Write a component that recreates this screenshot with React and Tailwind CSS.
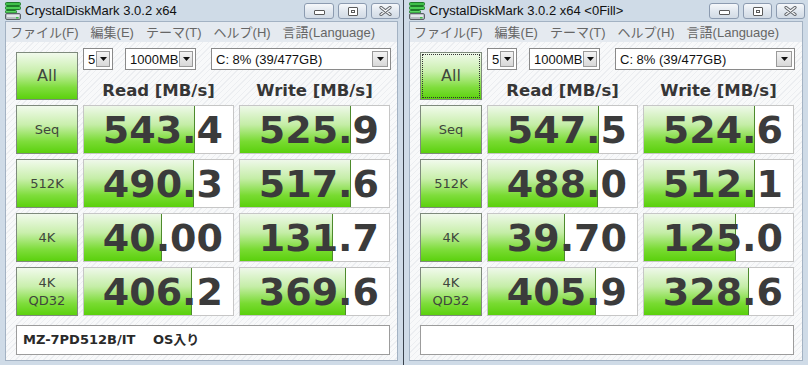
const WINDOWS = [
  {
    title: 'CrystalDiskMark 3.0.2 x64',
    rows: [
      [543.4, 525.9],
      [490.3, 517.6],
      [40.0, 131.7],
      [406.2, 369.6],
    ],
    comment: 'MZ-7PD512B/IT　 OS入り',
    focus: false,
  },
  {
    title: 'CrystalDiskMark 3.0.2 x64 <0Fill>',
    rows: [
      [547.5, 524.6],
      [488.0, 512.1],
      [39.7, 125.0],
      [405.9, 328.6],
    ],
    comment: '',
    focus: true,
  },
]

const MENU = ['ファイル(F)', '編集(E)', 'テーマ(T)', 'ヘルプ(H)', '言語(Language)']
const LABELS = [['Seq'], ['512K'], ['4K'], ['4K', 'QD32']]

const UI_FONT = 'font-["Liberation_Sans","Noto_Sans_CJK_JP",sans-serif]'

function fmt(v) {
  return v >= 100 ? v.toFixed(1) : v.toFixed(2)
}

// CrystalDiskMark draws the bar on a log scale
function barPct(v) {
  return Math.min(100, (Math.log10(v * 10) / 5) * 100)
}

function AppIcon() {
  return (
    <svg width="17" height="18" viewBox="0 0 17 18" className="shrink-0">
      <rect x="0.5" y="0.5" width="15" height="3" rx="1" fill="#3fbf4a" stroke="#1f7a2a" />
      <rect x="0.5" y="4.5" width="15" height="3" rx="1" fill="#4ccf55" stroke="#1f7a2a" />
      <rect x="0.5" y="8.5" width="11" height="2.5" rx="1" fill="#5ad862" stroke="#1f7a2a" />
      <rect x="0.5" y="11.5" width="15" height="6" rx="1.5" fill="#b9bec4" stroke="#5b6168" />
      <rect x="2" y="13" width="12" height="2" fill="#e3e6ea" />
      <rect x="11" y="15" width="2.5" height="1.5" fill="#3fbf4a" />
    </svg>
  )
}

function CapButton({ className, children }) {
  return (
    <div
      className={`flex h-[16px] items-center justify-center rounded-[3px] border border-[#8c9bb0] bg-[image:linear-gradient(#f6f8fb,#dfe6ee_55%,#d2dbe5)] ${className}`}
    >
      {children}
    </div>
  )
}

function TitleBar({ title }) {
  return (
    <div className="flex h-[21px] shrink-0 items-start pl-[5px]">
      <div className="mt-[2px]">
        <AppIcon />
      </div>
      <span className={`ml-[3px] mt-[3px] text-[13px] leading-[16px] text-[#111] ${UI_FONT}`}>
        {title}
      </span>
      <div className="ml-auto mr-[3px] mt-[3px] flex gap-[4px]">
        <CapButton className="w-[30px]">
          <div className="mt-[3px] h-[5px] w-[11px] rounded-[1px] border border-[#5a5a5a] bg-white" />
        </CapButton>
        <CapButton className="w-[29px]">
          <div className="flex h-[9px] w-[10px] items-center justify-center rounded-[1px] border border-[#5a5a5a] bg-white">
            <div className="h-[3px] w-[4px] border border-[#5a5a5a]" />
          </div>
        </CapButton>
        <CapButton className="w-[29px]">
          <svg width="13" height="10" viewBox="0 0 13 10">
            <path d="M2 1.5L11 8.5M11 1.5L2 8.5" stroke="#5f6368" strokeWidth="3.2" strokeLinecap="round" />
            <path d="M2 1.5L11 8.5M11 1.5L2 8.5" stroke="#f5f6f7" strokeWidth="1.3" strokeLinecap="round" />
          </svg>
        </CapButton>
      </div>
    </div>
  )
}

function Combo({ text, className, btn }) {
  return (
    <div
      className={`flex h-[22px] items-center justify-between border border-[#8a8a8a] bg-white pl-[4px] pr-[2px] text-[13px] text-[#111] ${UI_FONT} ${className}`}
    >
      <span className="leading-none">{text}</span>
      <div
        className={`flex h-[16px] items-center justify-center border border-[#9a9a9a] bg-[image:linear-gradient(#f4f4f4,#d8d8d8)] ${btn}`}
      >
        <svg width="7" height="4" viewBox="0 0 7 4">
          <path d="M0 0H7L3.5 4Z" fill="#111" />
        </svg>
      </div>
    </div>
  )
}

function GreenButton({ lines, focus, big }) {
  return (
    <div className="relative flex h-full w-[62px] shrink-0 flex-col items-center justify-center border border-[#7e8a7c] bg-[image:linear-gradient(#f1faec,#c9efac_40%,#7fdd3c_75%,#5bd10d)] font-['DejaVu_Sans',sans-serif] text-[#3f463d]">
      {focus && <div className="absolute inset-[1px] border border-dotted border-[#333]" />}
      {lines.map((l) => (
        <span key={l} className={big ? 'text-[16px] leading-[18px]' : 'text-[13px] leading-[18px]'}>
          {l}
        </span>
      ))}
    </div>
  )
}

function ValueCell({ value }) {
  return (
    <div className="relative flex h-full w-[151px] shrink-0 items-center justify-end border border-[#c6c6c6] bg-white pr-[10px]">
      <div
        className="absolute bottom-0 left-0 top-0 border-r border-[#4d8a2c] bg-[image:linear-gradient(#eef8e9,#c4eda6_40%,#79db32_75%,#5ad00c)]"
        style={{ width: `${barPct(value)}%` }}
      />
      <span className="relative font-['DejaVu_Sans',sans-serif] text-[38px] font-bold leading-none text-[#3b3b3b]">
        {fmt(value)}
      </span>
    </div>
  )
}

function Window({ win, className }) {
  return (
    <div className={`flex h-[365px] flex-col bg-[#cfdbe7] ${className}`}>
      <TitleBar title={win.title} />
      <div className="mx-[5px] flex flex-1 flex-col border border-[#a3b2c3]">
        <div className={`flex h-[20px] shrink-0 items-center gap-[12px] bg-[#e5eaf0] pl-[4px] text-[13px] leading-none text-[#666] ${UI_FONT}`}>
          {MENU.map((m) => (
            <span key={m}>{m}</span>
          ))}
        </div>
        <div className="flex flex-1 flex-col gap-[5px] bg-[image:repeating-linear-gradient(135deg,#f8f9fa_0px,#f8f9fa_3px,#eceef1_3px,#eceef1_4px)] pl-[10px] pt-[6px]">
          <div className="flex h-[52px] gap-[5px]">
            <div className="mt-[4px] h-[48px]">
              <GreenButton lines={['All']} focus={win.focus} big />
            </div>
            <div className="flex flex-col">
              <div className="flex">
                <Combo text="5" className="w-[30px]" btn="w-[14px]" />
                <Combo text="1000MB" className="ml-[12px] w-[71px]" btn="w-[14px]" />
                <Combo text="C: 8% (39/477GB)" className="ml-[15px] w-[180px]" btn="w-[16px]" />
              </div>
              <div className="flex pt-[10px] font-['DejaVu_Sans',sans-serif] text-[16.5px] font-bold leading-[22px] text-[#363636]">
                <div className="w-[151px] text-center">Read [MB/s]</div>
                <div className="ml-[5px] w-[151px] text-center">Write [MB/s]</div>
              </div>
            </div>
          </div>
          {win.rows.map((r, i) => (
            <div key={i} className="flex h-[49px] gap-[5px]">
              <GreenButton lines={LABELS[i]} />
              <ValueCell value={r[0]} />
              <ValueCell value={r[1]} />
            </div>
          ))}
          <div className="mt-[4px] flex h-[30px] w-[374px] items-center border border-[#9c9c9c] bg-white pl-[6px] font-['DejaVu_Sans','Noto_Sans_CJK_JP',sans-serif] text-[13px] font-bold text-[#2a2a2a]">
            {win.comment}
          </div>
        </div>
      </div>
      <div className="h-[4px] shrink-0" />
    </div>
  )
}

export default function App() {
  return (
    <div className="flex h-[365px] w-[808px] overflow-hidden">
      <Window win={WINDOWS[0]} className="w-[403px]" />
      <Window win={WINDOWS[1]} className="w-[405px] border-l border-[#3a424c]" />
    </div>
  )
}
